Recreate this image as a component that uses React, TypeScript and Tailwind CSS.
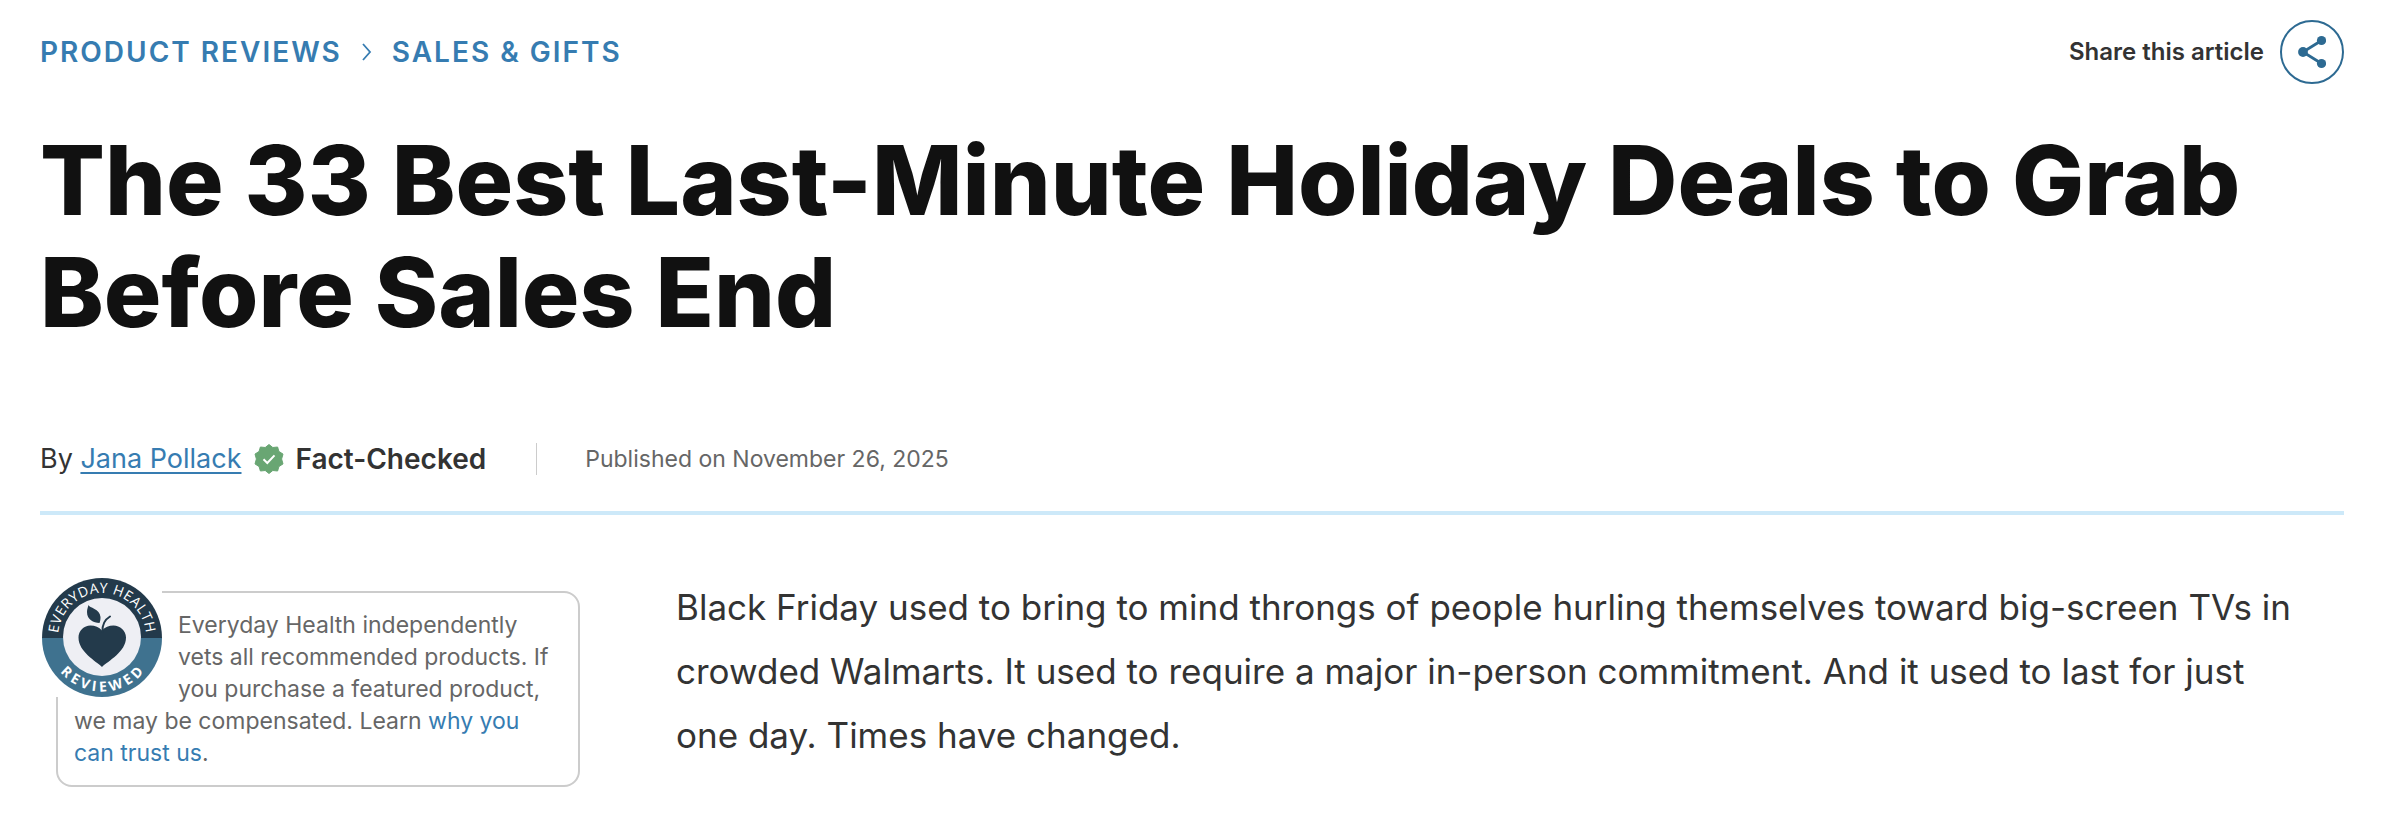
import React from "react";

function ShareIcon() {
  return (
    <svg viewBox="0 0 28 34" className="h-[34px] w-7" aria-hidden="true">
      <path d="M23.5 5.5 5 17l18.500 11.500" fill="none" stroke="#2d6a92" strokeWidth="2.800" />
      <circle cx="23.500" cy="5.500" r="4.600" fill="#2d6a92" />
      <circle cx="5" cy="17" r="4.900" fill="#2d6a92" />
      <circle cx="23.500" cy="28.500" r="4.600" fill="#2d6a92" />
    </svg>
  );
}

function CheckBadge() {
  return (
    <svg viewBox="0 0 30 30" className="size-[30px]" aria-hidden="true">
      <path
        d="M15 .5 18.800 3.500 23.600 3 24.900 7.400 29 10.100 27.600 15 29 19.900 24.900 22.600 23.600 27 18.800 26.500 15 29.500 11.200 26.500 6.400 27 5.100 22.600 1 19.900 2.400 15 1 10.100 5.100 7.400 6.400 3 11.200 3.500Z"
        fill="#69a673"
        stroke="#69a673"
        strokeLinejoin="round"
      />
      <path d="m9.500 15.300 3.800 3.700 7.200-7.600" fill="none" stroke="#fff" strokeWidth="2" />
    </svg>
  );
}

function ReviewedSeal() {
  return (
    <svg viewBox="0 0 120 120" className="size-[120px]" role="img" aria-label="Everyday Health Reviewed">
      <defs>
        <path id="seal-top" d="M16 60a44 44 0 0 1 88 0" />
        <path id="seal-bottom" d="M5.500 60a54.500 54.500 0 0 0 109 0" />
      </defs>
      <path d="M0 61a60 60 0 0 1 120 0Z" fill="#233a4b" />
      <path d="M0 61a60 59 0 0 0 120 0Z" fill="#3f728f" />
      <circle cx="60" cy="60" r="39" fill="#eeeff4" />
      <path
        d="M60 90C54 84 36.500 75 36.500 60.500c0-7 5.500-12 12-12 4.500 0 8.500 1.500 11.500 5 3-3.500 7-5 11.500-5 6.500 0 12.500 5 12.500 12C84 75 66 84 60 90Z"
        fill="#233a4b"
      />
      <path d="M60.500 55c-.5-7 2.500-12.500 7.500-15.500" fill="none" stroke="#233a4b" strokeWidth="2" strokeLinecap="round" />
      <path d="M46.500 28c.5 3 11.500 3.500 12 12 .1 2-.3 4.500-1 6-6 0-12.500-3.500-12.500-11 0-3 1-5 1.500-7Z" fill="#233a4b" />
      <text fill="#fff" fontFamily="Open Sans, sans-serif" fontSize="14" letterSpacing="0.500" textAnchor="middle">
        <textPath href="#seal-top" startOffset="50%">EVERYDAY HEALTH</textPath>
      </text>
      <text fill="#fff" fontFamily="Open Sans, sans-serif" fontSize="14" fontWeight="700" letterSpacing="3.500" textAnchor="middle">
        <textPath href="#seal-bottom" startOffset="51%">REVIEWED</textPath>
      </text>
    </svg>
  );
}

export default function App() {
  return (
    <main className="min-h-screen bg-white px-10 pt-5 font-['Inter',sans-serif] text-[#333]">
      <div className="mr-[10px]">
        <header className="flex items-center justify-between">
          <nav aria-label="Breadcrumb" className="flex items-center gap-5 text-[28px] leading-8 font-semibold tracking-[2px] text-[#367cb1] uppercase">
            <a href="#reviews">Product Reviews</a>
            <svg viewBox="0 0 10 18" className="h-[18px] w-[10px]" aria-hidden="true">
              <path d="m1 1 7 8-7 8" fill="none" stroke="currentColor" strokeWidth="1.800" />
            </svg>
            <a href="#sales">Sales &amp; Gifts</a>
          </nav>
          <div className="flex items-center gap-4">
            <span id="share-label" className="text-[24px] leading-8 font-semibold">Share this article</span>
            <button aria-labelledby="share-label" className="flex size-16 items-center justify-center rounded-full border-2 border-[#2d6a92]">
              <ShareIcon />
            </button>
          </div>
        </header>

        <h1 className="mt-10 text-[96px] leading-[112px] font-extrabold text-[#111]">
          The 33 Best Last-Minute Holiday Deals to Grab Before Sales End
        </h1>

        <div className="mt-[93px] flex items-center border-b-4 border-[#cde9f9] pb-[34px]">
          <p className="text-[27px] leading-9">
            By <a href="#author" className="text-[#367cb1] underline decoration-2 underline-offset-4">Jana Pollack</a>
          </p>
          <div className="ml-3 flex items-center gap-3">
            <CheckBadge />
            <span className="text-[28px] leading-9 font-semibold">Fact-Checked</span>
          </div>
          <div className="ml-[50px] h-8 w-px bg-[#ccc]" />
          <time dateTime="2025-11-26" className="ml-12 text-[23px] leading-9 text-[#666]">
            Published on November 26, 2025
          </time>
        </div>

        <div className="mt-[60px] flex items-start gap-24">
          <aside className="mt-4 ml-4 w-[524px] shrink-0 rounded-2xl border-2 border-[#ccc] p-4 text-[23px] leading-8 text-[#666]">
            <div className="float-left -mt-8 mr-4 -ml-8 bg-white">
              <ReviewedSeal />
            </div>
            Everyday Health independently vets all recommended products. If you purchase a featured product, we may be
            compensated. Learn{" "}
            <a href="#trust" className="text-[#367cb1]">why you can trust us</a>.
          </aside>
          <p className="min-w-0 flex-1 pr-9 text-[35px] leading-[64px]">
            Black Friday used to bring to mind throngs of people hurling themselves toward big-screen TVs in crowded
            Walmarts. It used to require a major in-person commitment. And it used to last for just one day. Times have
            changed.
          </p>
        </div>
      </div>
    </main>
  );
}
